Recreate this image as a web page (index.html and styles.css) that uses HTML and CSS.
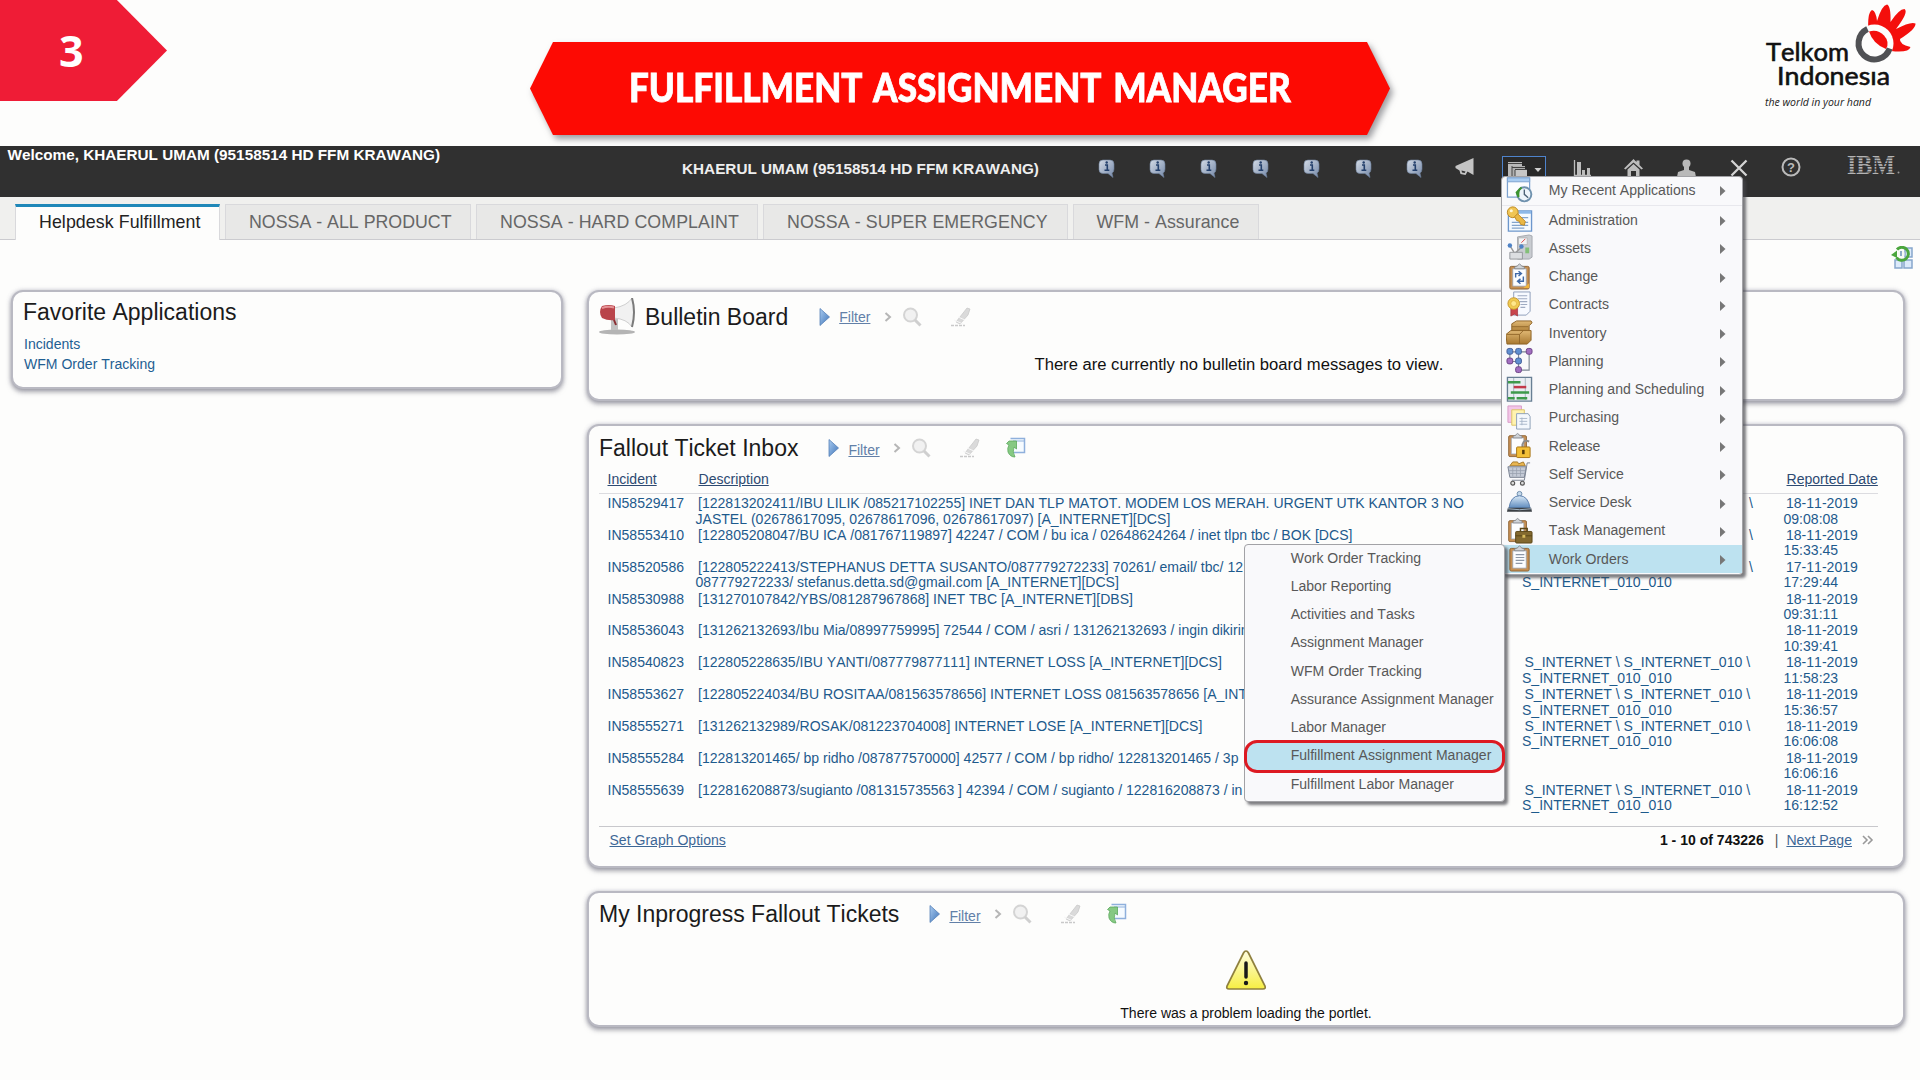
FILE: index.html
```html
<!DOCTYPE html>
<html lang="en">
<head>
<meta charset="utf-8">
<title>Fulfillment Assignment Manager</title>
<link rel="stylesheet" href="styles.css">
</head>
<body>
<svg class="defs" width="0" height="0" aria-hidden="true">
  <defs>
    <linearGradient id="g-blue" x1="0" y1="0" x2="1" y2="1"><stop offset="0" stop-color="#a9cbf0"/><stop offset="1" stop-color="#3f74b8"/></linearGradient>
    <linearGradient id="g-bubble" x1="0" y1="0" x2="1" y2="1"><stop offset="0" stop-color="#d3dbe6"/><stop offset="1" stop-color="#7488a8"/></linearGradient>
    <linearGradient id="g-box" x1="0" y1="0" x2="0" y2="1"><stop offset="0" stop-color="#e0b874"/><stop offset="1" stop-color="#a87830"/></linearGradient>
    <linearGradient id="g-bell" x1="0" y1="0" x2="0" y2="1"><stop offset="0" stop-color="#dcebf8"/><stop offset="1" stop-color="#5a88bc"/></linearGradient>
    <linearGradient id="g-warn" x1="0" y1="0" x2="0" y2="1"><stop offset="0" stop-color="#fffde0"/><stop offset="1" stop-color="#f6ee42"/></linearGradient>
  </defs>
  <symbol id="info" viewBox="0 0 17 19"><path d="M5 1h7q4 0 4 4v5q0 3-2 4l1 4.500-5-4H5q-4 0-4-4V5q0-4 4-4z" fill="url(#g-bubble)" stroke="#6f819c" stroke-width=".6"/><path d="M7 6h2.300v5M6.500 11.300h4.800" stroke="#24406c" stroke-width="1.600" fill="none"/><circle cx="8.700" cy="3.500" r="1.200" fill="#24406c"/></symbol>
  <symbol id="play" viewBox="0 0 11 18"><path d="M1 .5L10.500 9 1 17.500z" fill="url(#g-blue)" stroke="#5580b8" stroke-width=".8"/></symbol>
  <symbol id="chev" viewBox="0 0 8 10"><path d="M1.500 1l4.500 4-4.500 4" fill="none" stroke="#b6b6b6" stroke-width="2"/></symbol>
  <symbol id="lens" viewBox="0 0 20 20"><circle cx="8.500" cy="8" r="6.500" fill="#f1f1f1" stroke="#d4d4d4" stroke-width="2"/><path d="M13 13l5.500 5.500" stroke="#cfcfcf" stroke-width="3"/></symbol>
  <symbol id="pen" viewBox="0 0 21 20"><path d="M6 15L17 1l3 1-2 6-8 9z" fill="#dadada" stroke="#c6c6c6" stroke-width=".7"/><path d="M4 13l9 4M8 10l7 3" stroke="#f7f7f7"/><path d="M1 18.500h14" stroke="#c9c9c9" stroke-width="1.500" stroke-dasharray="3 1"/></symbol>
  <symbol id="open" viewBox="0 0 21 21"><path d="M5.500 1.500h14v14h-11" fill="#f6fbff" stroke="#8fb0dc" stroke-width="1.500"/><path d="M8 4h11" stroke="#8fb0dc"/><path d="M1.500 6.500L4 4h7.500v8l-2.500-2q-2 5 1 10-5 0-7-5-1-4 1-7z" fill="#86c983" stroke="#5aa85c" stroke-width=".8"/></symbol>
  <symbol id="board" viewBox="0 0 26 28"><rect x="3" y="3.500" width="20" height="23.500" rx="1.500" fill="#c68f52" stroke="#8d6234"/><path d="M6 6h14v18H6z" fill="#fcfdff" stroke="#9aa3b0" stroke-width=".8"/><path d="M8 6V4l3-1q2-4 4 0l3 1v2z" fill="#cfd3d8" stroke="#7a7f86" stroke-width=".8"/></symbol>
  <symbol id="m-recent" viewBox="0 0 28 28"><path d="M1.500 2h23v20h-23z" fill="#fbfdff" stroke="#7da2d0" stroke-width="1.300"/><path d="M1.500 2h23v4h-23z" fill="#a9cdf2" stroke="#7da2d0"/><circle cx="19" cy="19" r="7.300" fill="#eef5fb" stroke="#6f91ae" stroke-width="2"/><path d="M19 14v5l4 3.500" fill="none" stroke="#4d6276" stroke-width="1.400"/><path d="M16 12q-4 2-3 10l-2-5 3-3z" fill="#48a43a" stroke="#3c9430" stroke-width="2"/></symbol>
  <symbol id="m-admin" viewBox="0 0 28 28"><path d="M2.500 5h24v21h-24z" fill="#f5faff" stroke="#6d97cc" stroke-width="1.400"/><path d="M3 5h23v3H3z" fill="#8db8e8"/><path d="M14 12h9M6 17h17M6 20h17M6 23h13" stroke="#83a4cc" stroke-width="1.300"/><circle cx="7" cy="6.500" r="5.600" fill="#f0c554" stroke="#bd8924"/><circle cx="5.500" cy="5" r="1.600" fill="#fff7d8"/><path d="M9 11l3-3 8 8-1 4-4-1-1-3-3-1z" fill="#eab845" stroke="#bd8924"/></symbol>
  <symbol id="m-assets" viewBox="0 0 28 28"><path d="M12 3l12-2 3 1v22l-3 2H12z" fill="#c9ccd1" stroke="#a4a8ae"/><path d="M13 4h9v7h-9z" fill="#f1f3f5" stroke="#aaa" stroke-width=".7"/><path d="M16 9l4-4" stroke="#d44"/><path d="M20 14h4v6h-4z" fill="#83bf78"/><path d="M4 12l5 8 8-7" stroke="#999" fill="none" stroke-width="1.500"/><path d="M4 19h13v7H4z" fill="#dcdee1" stroke="#95989c"/><circle cx="4" cy="12" r="2.300" fill="#4f83c6"/><circle cx="16" cy="13" r="2.300" fill="#4f83c6"/></symbol>
  <symbol id="m-change" viewBox="0 0 28 28"><use href="#board" width="26" height="28" x="1"/><path d="M10 15v-4h5M13 8.500l3 2.500-3 2.500M18 14v5h-5M15 16.500L12 19l3 2.500" fill="none" stroke="#3f69a8" stroke-width="1.500"/><path d="M24 21v5h-6z" fill="#f1b43d"/></symbol>
  <symbol id="m-contracts" viewBox="0 0 28 28"><path d="M8 1h17v20l-4 4H8z" fill="#f8faff" stroke="#8e9dba"/><path d="M12 5h10M12 8h10M14 11h8M15 14h7M15 17h5" stroke="#9fabc2" stroke-width="1.100"/><path d="M5 17h7v9l-3-2-4 2z" fill="#c9444c" stroke="#9b2f38" stroke-width=".7"/><circle cx="8" cy="13" r="6" fill="#f1cb50" stroke="#c6962c"/><circle cx="8" cy="13" r="3" fill="#ffe88c" stroke="#d9ab3c" stroke-width=".7"/></symbol>
  <symbol id="m-inventory" viewBox="0 0 28 28"><path d="M6 5l5-3h15l1 2-3 3v7H6z" fill="url(#g-box)" stroke="#8f6428"/><path d="M0 16l5-4h21v10l-4 4H1z" fill="url(#g-box)" stroke="#8f6428"/><path d="M1 16h13v10M14 16l4-4M6 8h17" stroke="#8f6428" fill="none" stroke-width=".9"/></symbol>
  <symbol id="m-planning" viewBox="0 0 28 28"><path d="M4 5h20v19H13V5M4 5v10h9" fill="none" stroke="#7d8795" stroke-width="1.200"/><g stroke="#47609a" fill="#5f8fd0"><rect x="1" y="1.500" width="6" height="6" rx="2"/><rect x="10" y="1.500" width="6" height="6" rx="2"/><rect x="10" y="11.500" width="6" height="6" rx="2"/></g><g stroke="#6b4385" fill="#a26ec0"><rect x="21" y="1.500" width="6" height="6" rx="2"/><rect x="1" y="11.500" width="6" height="6" rx="2"/><rect x="10" y="20.500" width="6" height="6" rx="2"/></g></symbol>
  <symbol id="m-sched" viewBox="0 0 28 28"><path d="M1.500 1.500h25v24.500h-25z" fill="#e9eef2" stroke="#687f94" stroke-width="1.400"/><path d="M8 2v24M20 2v24" stroke="#a8b5c0"/><path d="M2 6.500h13M5 17h19M2 23h7M11 23h11" stroke="#3e9a4b" stroke-width="2.600"/><path d="M8 11.500h13" stroke="#c23a4a" stroke-width="2.600"/></symbol>
  <symbol id="m-purch" viewBox="0 0 28 28"><path d="M2 2h14v17H2z" fill="#f3c6e8" stroke="#d89cc8"/><path d="M6 6h13v16H6z" fill="#fff3b0" stroke="#dcc566"/><path d="M11 10h12l2 3v13H11z" fill="#f4f8fd" stroke="#8ea0b8"/><path d="M14 15h8M14 18h8M14 21h8M16.500 14v8" stroke="#a5b3c6" stroke-width=".9"/></symbol>
  <symbol id="m-release" viewBox="0 0 28 28"><use href="#board" width="24" height="27" x="0"/><path d="M17 17v-4q2-6 7-3" fill="none" stroke="#8d8d8d" stroke-width="2"/><rect x="11" y="15.500" width="14" height="11" rx="1" fill="#f3bf36" stroke="#a87618"/><path d="M18 18.500v4.500" stroke="#553a08" stroke-width="2.600"/></symbol>
  <symbol id="m-self" viewBox="0 0 28 28"><path d="M4 6l3-4h5l1 2 5-2 2 4z" fill="#e9b651" stroke="#a6792a"/><path d="M2 7h19l-2 11H4z" fill="#c4cad6" stroke="#7a8292"/><path d="M25 3h-3l-3 18H6" fill="none" stroke="#7a8292"/><path d="M7 8v9M11 8v9M15 8v9M3 11h17M3 14h17" fill="none" stroke="#98a0ae" stroke-width=".8"/><circle cx="7" cy="24" r="2" fill="#ddd" stroke="#555" stroke-width="1.200"/><circle cx="17" cy="24" r="2" fill="#ddd" stroke="#555" stroke-width="1.200"/></symbol>
  <symbol id="m-desk" viewBox="0 0 28 28"><circle cx="14" cy="5" r="2.500" fill="#c4d8ec" stroke="#6d8cab"/><path d="M3 20Q5 7 14 7T25 20z" fill="url(#g-bell)" stroke="#5b7fae"/><path d="M2 19.500h24l1 4H1z" fill="#3b4046"/><path d="M2 20.500q12 2 24 0" stroke="#a7b8c8" fill="none"/></symbol>
  <symbol id="m-task" viewBox="0 0 28 28"><use href="#board" width="24" height="27" x="0"/><path d="M15 15v-3h7v3" fill="none" stroke="#5d4a1c" stroke-width="1.500"/><rect x="10" y="15" width="17" height="12" rx="1" fill="#83692f" stroke="#5a4718"/><path d="M10 19.500h17" stroke="#5a4718"/><path d="M17 18.500h3v3h-3z" fill="#d8bb5c"/></symbol>
  <symbol id="m-work" viewBox="0 0 28 28"><use href="#board" width="26" height="28" x="1"/><path d="M10 10h9M10 13h9M10 16h9M10 19h7" stroke="#8d97a6" stroke-width="1.200"/></symbol>
  <symbol id="tri" viewBox="0 0 7 10"><path d="M1 0l5.500 5L1 10z" fill="#777"/></symbol>
</svg>

<div class="page">
  <header class="banner">
    <div class="step"><span>3</span></div>
    <div class="ribbon-wrap"><h1 class="ribbon"><span>FULFILLMENT ASSIGNMENT MANAGER</span></h1></div>
    <svg class="brand" width="160" height="112" viewBox="0 0 160 112">
      <path d="M108.500 32Q107 13 112 10Q116 11 117 21Q122 5 127 4.500Q131 6 130.500 22Q139 9 144.500 9Q149 12 136 29Q151 21 155.500 23.500Q156 29 140 39Q139 44 150.500 47Q149 53 131 51z" fill="#f40f0c"/>
      <circle cx="114.500" cy="43.500" r="19" fill="#fdfdfc"/>
      <path d="M109 31.500Q118 29 124 35.500T126 49Q113 44 109 31.500z" fill="#f40f0c"/>
      <path d="M107.500 29A16 16 0 1 0 129.700 48.500" fill="none" stroke="#505154" stroke-width="6"/>
      <text x="6" y="61" font-size="25" textLength="83" lengthAdjust="spacingAndGlyphs" class="brand-name">Telkom</text>
      <text x="17" y="84.500" font-size="25" textLength="113" lengthAdjust="spacingAndGlyphs" class="brand-name">Indonesıa</text>
      <text x="5" y="105.500" font-size="10" textLength="106" lengthAdjust="spacingAndGlyphs" class="brand-tag">the world in your hand</text>
    </svg>
  </header>

  <nav class="bar">
    <div class="welcome">Welcome, KHAERUL UMAM (95158514 HD FFM KRAWANG)</div>
    <div class="user">KHAERUL UMAM (95158514 HD FFM KRAWANG)</div>
    <div class="notices">
      <svg><use href="#info"/></svg><svg><use href="#info"/></svg><svg><use href="#info"/></svg><svg><use href="#info"/></svg><svg><use href="#info"/></svg><svg><use href="#info"/></svg><svg><use href="#info"/></svg>
      <svg class="horn" viewBox="0 0 19 18"><path d="M18.500 0v17l-6-3.500-2 3.500-5-1-1-3.500-4-2.500v-2z" fill="#c4c4c4"/><path d="M6.500 12.500l4 1-.8 1.500-2.700-.5z" fill="#303030"/></svg>
    </div>
    <button class="goto" aria-label="Go To">
      <svg width="40" height="20" viewBox="0 0 40 20"><path d="M2 3h14v4H6v10H2z" fill="#b9b9b9"/><path d="M6 7h13v4H9v8H6z" fill="#b0b0b0"/><path d="M9 11h12v9H9z" fill="#c6c6c6"/><path d="M2 4.500h14M6 8.500h13M6 7v10M9 11v9M9 10.500h12" stroke="#444"/><path d="M28.500 9h7L32 13z" fill="#d0d0d0"/></svg>
    </button>
    <div class="links">
      <svg width="19" height="18" viewBox="0 0 19 18"><path d="M2.500 1v15.500H19" stroke="#bdbdbd" stroke-width="1.300" fill="none"/><path d="M5 3h4v13H5zM10 11h3v5h-3zM15 9h3v7h-3z" fill="#bdbdbd"/></svg>
      <svg width="19" height="18" viewBox="0 0 19 18"><path d="M9.500 0l3 3V1.500h3V6L19 9.500l-1.500 1L9.500 3.500l-8 7L0 9.500z" fill="#bdbdbd"/><path d="M9.500 5l6 5.500V18H12v-6H7v6H3.500v-7.500z" fill="#bdbdbd"/></svg>
      <svg width="19" height="18" viewBox="0 0 19 18"><circle cx="9.500" cy="4.500" r="4" fill="#b9b9b9"/><path d="M7 7h5v4l6 2 1 5H0l1-5 6-2z" fill="#b9b9b9"/></svg>
      <svg width="18" height="18" viewBox="0 0 18 18"><path d="M1.500 1.500l15 15M16.500 1.500l-15 15" stroke="#d4d4d4" stroke-width="2.300"/></svg>
      <svg class="help" width="20" height="20" viewBox="0 0 20 20"><circle cx="10" cy="10" r="8.500" fill="none" stroke="#bababa" stroke-width="2"/><text x="10" y="14.500" text-anchor="middle" class="q">?</text></svg>
    </div>
    <svg class="ibm" width="54" height="30" viewBox="0 0 54 30"><text x="0" y="24" textLength="48" lengthAdjust="spacingAndGlyphs">IBM</text><path d="M0 8h50M0 10.800h50M0 13.600h50M0 16.400h50M0 19.200h50M0 22h50" stroke="#303030" stroke-width="1"/><circle cx="51.500" cy="22.500" r="1" fill="#999"/></svg>
  </nav>

  <div class="tabs">
    <a class="tab on">Helpdesk Fulfillment</a>
    <a class="tab t2">NOSSA - ALL PRODUCT</a>
    <a class="tab t3">NOSSA - HARD COMPLAINT</a>
    <a class="tab t4">NOSSA - SUPER EMERGENCY</a>
    <a class="tab t5">WFM - Assurance</a>
  </div>

  <div class="tools">
    <svg width="24" height="24" viewBox="0 0 24 24"><g fill="#dceafa" stroke="#86a6cc" stroke-width="1.500"><path d="M14 2h7v9h-7zM4 14h7v8H4zM13 14h8v8h-8z"/></g><path d="M6 3.500a6.500 6.500 0 1 1-.5 8" fill="none" stroke="#4ba63d" stroke-width="3"/><path d="M0 9l6-4.500V12z" fill="#4ba63d"/><circle cx="10" cy="8" r="3.500" fill="#f4faf2"/><path d="M10 5v5" stroke="#6a90b8" stroke-width="1.500"/></svg>
  </div>

  <main class="content">
    <section class="card fav">
      <h2>Favorite Applications</h2>
      <a>Incidents</a>
      <a>WFM Order Tracking</a>
    </section>

    <div class="stack">
      <section class="card bulletin">
        <div class="head">
          <svg class="mega" width="40" height="38" viewBox="0 0 40 38"><ellipse cx="20" cy="34" rx="18" ry="2.500" fill="#b4b4b4"/><path d="M14 18h7v14h-7z" fill="#c2c2c2"/><path d="M17 10Q30 8 35 0q4 14 0 29-5-8-18-9z" fill="#f1f1f1" stroke="#cfcfcf"/><path d="M35 0q4 14 0 29" fill="none" stroke="#7b7b7b" stroke-width="2"/><path d="M5 8q7-2 13 0v14q-7 1-13-2-4-6 0-12z" fill="#b9444a"/><path d="M5 10q6-2 12-.5" stroke="#e69396" stroke-width="2" fill="none"/><path d="M17 22l2 5" stroke="#8b2d32" stroke-width="2"/></svg>
          <h2>Bulletin Board</h2>
          <svg class="play"><use href="#play"/></svg><a class="filter">Filter</a><svg class="chev"><use href="#chev"/></svg><svg class="lens"><use href="#lens"/></svg><svg class="pen"><use href="#pen"/></svg>
        </div>
        <p>There are currently no bulletin board messages to view.</p>
      </section>

      <section class="card inbox">
        <div class="head">
          <h2>Fallout Ticket Inbox</h2>
          <svg class="play"><use href="#play"/></svg><a class="filter">Filter</a><svg class="chev"><use href="#chev"/></svg><svg class="lens"><use href="#lens"/></svg><svg class="pen"><use href="#pen"/></svg><svg class="open"><use href="#open"/></svg>
        </div>
        <div class="row cols"><a>Incident</a><a>Description</a><span></span><a>Reported Date</a></div>
        <div class="rows">
          <div class="row"><a>IN58529417</a><p>[122813202411/IBU LILIK /085217102255] INET DAN TLP MATOT. MODEM LOS MERAH. URGENT UTK KANTOR 3 NO<br>JASTEL (02678617095, 02678617096, 02678617097) [A_INTERNET][DCS]</p><p class="tail">\</p><p>18-11-2019<br>09:08:08</p></div>
          <div class="row"><a>IN58553410</a><p>[122805208047/BU ICA /081767119897] 42247 / COM / bu ica / 02648624264 / inet tlpn tbc / BOK [DCS]</p><p class="tail">\</p><p>18-11-2019<br>15:33:45</p></div>
          <div class="row"><a>IN58520586</a><p>[122805222413/STEPHANUS DETTA SUSANTO/087779272233] 70261/ email/ tbc/ 12<br>087779272233/ stefanus.detta.sd@gmail.com [A_INTERNET][DCS]</p><p><span class="tail">\</span><br>S_INTERNET_010_010</p><p>17-11-2019<br>17:29:44</p></div>
          <div class="row"><a>IN58530988</a><p>[131270107842/YBS/081287967868] INET TBC [A_INTERNET][DBS]</p><p></p><p>18-11-2019<br>09:31:11</p></div>
          <div class="row"><a>IN58536043</a><p>[131262132693/Ibu Mia/08997759995] 72544 / COM / asri / 131262132693 / ingin dikirim</p><p></p><p>18-11-2019<br>10:39:41</p></div>
          <div class="row"><a>IN58540823</a><p>[122805228635/IBU YANTI/087779877111] INTERNET LOSS [A_INTERNET][DCS]</p><p>S_INTERNET \ S_INTERNET_010 \<br>S_INTERNET_010_010</p><p>18-11-2019<br>11:58:23</p></div>
          <div class="row"><a>IN58553627</a><p>[122805224034/BU ROSITAA/081563578656] INTERNET LOSS 081563578656 [A_INT</p><p>S_INTERNET \ S_INTERNET_010 \<br>S_INTERNET_010_010</p><p>18-11-2019<br>15:36:57</p></div>
          <div class="row"><a>IN58555271</a><p>[131262132989/ROSAK/081223704008] INTERNET LOSE [A_INTERNET][DCS]</p><p>S_INTERNET \ S_INTERNET_010 \<br>S_INTERNET_010_010</p><p>18-11-2019<br>16:06:08</p></div>
          <div class="row"><a>IN58555284</a><p>[122813201465/ bp ridho /087877570000] 42577 / COM / bp ridho/ 122813201465 / 3p</p><p></p><p>18-11-2019<br>16:06:16</p></div>
          <div class="row"><a>IN58555639</a><p>[122816208873/sugianto /081315735563 ] 42394 / COM / sugianto / 122816208873 / in</p><p>S_INTERNET \ S_INTERNET_010 \<br>S_INTERNET_010_010</p><p>18-11-2019<br>16:12:52</p></div>
        </div>
        <div class="foot">
          <a class="graph">Set Graph Options</a>
          <b>1 - 10 of 743226</b><i>|</i><a>Next Page</a><svg width="12" height="10" viewBox="0 0 12 10"><path d="M1 1l4 4-4 4M6 1l4 4-4 4" fill="none" stroke="#9a9a9a" stroke-width="1.600"/></svg>
        </div>
      </section>

      <section class="card progress">
        <div class="head">
          <h2>My Inprogress Fallout Tickets</h2>
          <svg class="play"><use href="#play"/></svg><a class="filter">Filter</a><svg class="chev"><use href="#chev"/></svg><svg class="lens"><use href="#lens"/></svg><svg class="pen"><use href="#pen"/></svg><svg class="open"><use href="#open"/></svg>
        </div>
        <svg class="warn" width="42" height="40" viewBox="0 0 42 40"><path d="M21 1q1.500 0 2.500 2L40 36q1 3-2 3H4q-3 0-2-3L18.500 3q1-2 2.500-2z" fill="url(#g-warn)" stroke="#8f803e" stroke-width="1.700"/><path d="M21 13v14" stroke="#191919" stroke-width="3.500" stroke-linecap="round"/><circle cx="21" cy="33" r="2.200" fill="#191919"/></svg>
        <p>There was a problem loading the portlet.</p>
      </section>
    </div>
  </main>

  <ul class="menu main-menu">
    <li class="first"><svg><use href="#m-recent"/></svg><span>My Recent Applications</span><svg class="tri"><use href="#tri"/></svg></li>
    <li><svg><use href="#m-admin"/></svg><span>Administration</span><svg class="tri"><use href="#tri"/></svg></li>
    <li><svg><use href="#m-assets"/></svg><span>Assets</span><svg class="tri"><use href="#tri"/></svg></li>
    <li><svg><use href="#m-change"/></svg><span>Change</span><svg class="tri"><use href="#tri"/></svg></li>
    <li><svg><use href="#m-contracts"/></svg><span>Contracts</span><svg class="tri"><use href="#tri"/></svg></li>
    <li><svg><use href="#m-inventory"/></svg><span>Inventory</span><svg class="tri"><use href="#tri"/></svg></li>
    <li><svg><use href="#m-planning"/></svg><span>Planning</span><svg class="tri"><use href="#tri"/></svg></li>
    <li><svg><use href="#m-sched"/></svg><span>Planning and Scheduling</span><svg class="tri"><use href="#tri"/></svg></li>
    <li><svg><use href="#m-purch"/></svg><span>Purchasing</span><svg class="tri"><use href="#tri"/></svg></li>
    <li><svg><use href="#m-release"/></svg><span>Release</span><svg class="tri"><use href="#tri"/></svg></li>
    <li><svg><use href="#m-self"/></svg><span>Self Service</span><svg class="tri"><use href="#tri"/></svg></li>
    <li><svg><use href="#m-desk"/></svg><span>Service Desk</span><svg class="tri"><use href="#tri"/></svg></li>
    <li><svg><use href="#m-task"/></svg><span>Task Management</span><svg class="tri"><use href="#tri"/></svg></li>
    <li class="hot"><svg><use href="#m-work"/></svg><span>Work Orders</span><svg class="tri"><use href="#tri"/></svg></li>
  </ul>

  <ul class="menu sub-menu">
    <li>Work Order Tracking</li>
    <li>Labor Reporting</li>
    <li>Activities and Tasks</li>
    <li>Assignment Manager</li>
    <li>WFM Order Tracking</li>
    <li>Assurance Assignment Manager</li>
    <li>Labor Manager</li>
    <li class="hot ring">Fulfillment Assignment Manager</li>
    <li>Fulfillment Labor Manager</li>
  </ul>
</div>
</body>
</html>
```
FILE: styles.css
```css
* { box-sizing: border-box; }
body { margin: 0; background: #fdfdfc; font-family: "Liberation Sans", Arial, sans-serif; font-size: 14.05px; color: #111; font-kerning: none; }
h1, h2, p, ul { margin: 0; padding: 0; font-weight: normal; }
li { list-style: none; }
svg { display: block; flex: none; }
.defs { position: absolute; }
.page { position: relative; width: 1920px; height: 1080px; overflow: hidden; }

/* slide banner */
.banner { display: grid; grid-template-columns: 530px 860px 530px; height: 146px; }
.step { width: 167px; height: 101px; background: #ef1c36; clip-path: polygon(0 0, 70% 0, 100% 50%, 70% 100%, 0 100%); }
.step span { display: block; padding: 21px 0 0 59px; font: 700 43px/60px "Open Sans", sans-serif; color: #fff; }
.ribbon-wrap { padding-top: 42px; filter: drop-shadow(3px 4px 3px rgba(60, 60, 70, .5)); }
.ribbon { height: 93px; background: #fd0a03; clip-path: polygon(23px 0, 837px 0, 100% 50%, 837px 100%, 23px 100%, 0 50%); text-align: center; color: #fff; font: 900 40px/90px Lato, sans-serif; white-space: nowrap; }
.ribbon span { display: inline-block; word-spacing: 5px; transform: scaleX(.878); -webkit-text-stroke: .8px #fff; }
.brand { justify-self: end; }
.brand-name { font-family: Lato, sans-serif; font-weight: 400; fill: #111; stroke: #111; stroke-width: .6; }
.brand-tag { font-family: "Open Sans", sans-serif; font-style: italic; font-weight: 500; fill: #222; }

/* dark application bar */
.bar { display: flex; height: 51px; background: #303030; color: #fff; font-weight: 700; font-size: 15.3px; white-space: nowrap; }
.welcome { width: 682px; padding-left: 7.500px; line-height: 18px; }
.user { width: 398.500px; line-height: 18px; padding-top: 14px; color: #eee; }
.notices { display: flex; width: 421.500px; padding-top: 13px; }
.notices svg { width: 17px; height: 19px; margin: 0 17.2px; }
.notices .horn { width: 19px; height: 18px; margin: -1px 0 0 15px; }
.goto { width: 44px; height: 26px; margin: 10px 9px 0 0; padding: 1px 0 0 3px; border: 1px solid #4e83cc; background: #292929; }
.goto svg { margin-top: -1px; }
.links { display: grid; grid-template-columns: repeat(5, 52.5px); justify-items: center; padding-top: 13px; height: 34px; }
.links .help { margin-top: -2px; }
.q { font: 700 13px "Liberation Sans", sans-serif; fill: #bababa; }
.ibm { margin: 4px 0 0 29px; overflow: visible; }
.ibm text { font: 700 27px "Liberation Serif", serif; fill: #b4b4b4; }

/* tabs */
.tabs { display: flex; height: 43px; padding: 7px 0 0 15px; background: #f0f0ee; border-bottom: 1px solid #cbcbcf; font-size: 17.8px; }
.tab { height: 35px; line-height: 34px; margin-right: 5px; background: #e8e8e7; border: 1px solid #d9d9dc; border-bottom: 0; color: #666; white-space: nowrap; }
.tab.on { width: 205px; height: 36px; line-height: 30px; padding-left: 23px; background: #fdfdfc; border-top: 3px solid #1f87b8; color: #222; letter-spacing: .07px; }
.t2 { width: 246px; padding-left: 23px; }
.t3 { width: 282px; padding-left: 23px; letter-spacing: .08px; }
.t4 { width: 305px; padding-left: 23px; letter-spacing: .08px; }
.t5 { width: 186px; padding-left: 22.500px; letter-spacing: .04px; }
.tools { display: flex; justify-content: flex-end; height: 50px; padding: 6px 5px 0 0; }

/* portlets */
.content { display: grid; grid-template-columns: 552px 1318px; column-gap: 24px; padding-left: 11px; align-items: start; }
.stack { display: grid; grid-template-columns: minmax(0, 1fr); row-gap: 23px; }
.card { border: 2px solid #b9b9c2; border-radius: 12px; background: #fdfdfc; box-shadow: 0 3px 5px rgba(95, 95, 110, .55), 0 0 4px rgba(120, 120, 150, .35); }
.card h2 { font-size: 23px; line-height: 28px; white-space: nowrap; color: #1b1b1b; }
.fav { height: 99px; padding: 6px 0 0 10px; }
.fav a { display: block; margin-left: 1px; line-height: 21px; color: #1f5f93; }
.fav h2 + a { margin-top: 8px; line-height: 20px; }
.head { display: flex; align-items: center; height: 28px; }
.head .play { width: 11px; height: 18px; margin: 0 9px 0 30px; }
.filter { width: 45px; color: #6280a8; text-decoration: underline; line-height: 16px; margin-top: 3px; }
.chev { width: 8px; height: 10px; margin-top: -1px; }
.lens { width: 20px; height: 20px; margin-left: 10px; }
.pen { width: 21px; height: 20px; margin-left: 28px; }
.open { width: 21px; height: 21px; margin: -2px 0 0 25px; }
.bulletin { height: 111px; padding-top: 11px; }
.mega { margin: 0 8px 0 8px; }
.bulletin .filter { margin-top: 0; }
.bulletin .play { margin-left: 31px; }
.bulletin p { margin-top: 24px; text-align: center; font-size: 16.62px; line-height: 20px; padding-right: 14px; }
.inbox { height: 444px; padding: 8px 25px 0 10px; }
.row { display: grid; grid-template-columns: 91px 826.500px 261.500px 91px; padding-left: 8.500px; white-space: nowrap; height: 31.85px; line-height: 15.5px; color: #1d5a8c; }
.row p { text-indent: 2.500px; margin-left: -3px; }
.row .tail { text-indent: 0; padding-left: 227px; }
.row span.tail { padding-left: 224.500px; }
.cols { margin-top: 9px; height: 23px; line-height: 16px; border-bottom: 1px solid #dcdce0; color: #2d4a72; text-decoration: underline; }
.rows { padding-top: 2px; height: 333px; border-bottom: 1px solid #c8c8cc; }
.foot { display: flex; align-items: center; height: 28px; padding: 0 4px 3px 10.500px; line-height: 16px; }
.foot a { color: #3d6796; text-decoration: underline; }
.foot i { margin: 0 8px 0 11px; font-style: normal; color: #555; }
.foot svg { margin-left: 10px; }
.graph { margin-right: auto; }
.progress { height: 136px; padding: 7px 0 0 10px; }
.warn { margin: 22px auto 0; transform: translateX(-5px); }
.progress p { margin-top: 13px; margin-right: 10px; text-align: center; line-height: 20px; }

/* pop-up menus */
.menu { position: absolute; background: #f9f9fb; border: 1px solid #a2a2a6; border-radius: 4px; color: #585858; box-shadow: 3px 3px 3px rgba(70, 70, 75, .7); white-space: nowrap; }
.main-menu { left: 1501px; top: 175.500px; width: 242px; height: 399px; }
.main-menu li { display: flex; align-items: center; height: 28.25px; padding-left: 4px; }
.main-menu svg { width: 27px; height: 27px; }
.main-menu span { width: 186px; padding-left: 15.800px; }
.main-menu .tri { width: 7px; height: 10px; margin-top: 3px; }
.main-menu .first { height: 29px; padding-bottom: 2px; border-bottom: 1px solid #e8e8ed; }
.hot { background: #bde2f0; }
.sub-menu { left: 1244px; top: 543.500px; width: 261px; height: 258px; }
.sub-menu li { height: 28.25px; line-height: 27.500px; padding-left: 45.700px; }
.sub-menu .ring { margin: -2px -1px -2px -1px; height: 32.25px; line-height: 25.500px; padding-left: 43.700px; border: 3px solid #dd1a22; border-radius: 13px; }
```
